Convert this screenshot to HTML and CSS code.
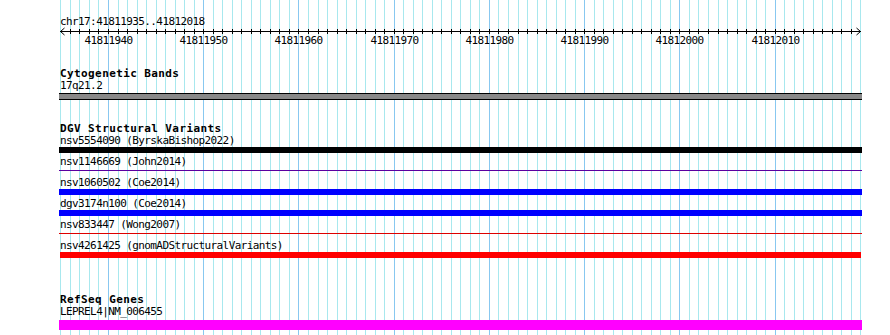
FILE: index.html
```html
<!DOCTYPE html>
<html lang="en">
<head>
    <meta charset="UTF-8">
    <meta name="viewport" content="width=device-width, initial-scale=1.0">
    <title>chr17:41811935..41812018</title>
    <link rel="stylesheet" href="styles.css">
</head>
<body>
    <div class="browser">
        <svg class="guides" id="guides" width="890" height="335"></svg>

        <div class="position">chr17:41811935..41812018</div>
        <svg class="ruler" id="ruler" width="890" height="20">
            <line class="axis" x1="60" y1="4.5" x2="861" y2="4.5"></line>
            <polyline class="arrow" points="64.5,1 60.5,4.5 64.5,8"></polyline>
            <polyline class="arrow" points="856.5,1 860.5,4.5 856.5,8"></polyline>
        </svg>

        <div class="track cyto">
            <div class="track-title">Cytogenetic Bands</div>
            <div class="item">
                <div class="label">17q21.2</div>
                <div class="bar band"></div>
            </div>
        </div>

        <div class="track dgv">
            <div class="track-title">DGV Structural Variants</div>
            <div class="item">
                <div class="label">nsv5554090 (ByrskaBishop2022)</div>
                <div class="bar black"></div>
            </div>
            <div class="item">
                <div class="label">nsv1146669 (John2014)</div>
                <div class="bar thin purple"></div>
            </div>
            <div class="item">
                <div class="label">nsv1060502 (Coe2014)</div>
                <div class="bar blue"></div>
            </div>
            <div class="item">
                <div class="label">dgv3174n100 (Coe2014)</div>
                <div class="bar blue"></div>
            </div>
            <div class="item">
                <div class="label">nsv833447 (Wong2007)</div>
                <div class="bar thin red"></div>
            </div>
            <div class="item">
                <div class="label">nsv4261425 (gnomADStructuralVariants)</div>
                <div class="bar red short"></div>
            </div>
        </div>

        <div class="track refseq">
            <div class="track-title">RefSeq Genes</div>
            <div class="item">
                <div class="label">LEPREL4|NM_006455</div>
                <div class="bar gene"></div>
            </div>
        </div>
    </div>

    <script>
        const svgNS = "http://www.w3.org/2000/svg";
        const start = 41811935;
        const end = 41812018;
        const left = 60.9;
        const bpWidth = 800 / (end - start + 1);

        const guides = document.getElementById("guides");
        const ruler = document.getElementById("ruler");

        function addLine(svg, x1, y1, x2, y2, cls) {
            const l = document.createElementNS(svgNS, "line");
            l.setAttribute("x1", x1);
            l.setAttribute("y1", y1);
            l.setAttribute("x2", x2);
            l.setAttribute("y2", y2);
            l.setAttribute("class", cls);
            svg.appendChild(l);
        }

        for (let i = 0; i <= end - start + 1; i++) {
            const pos = start + i;
            const x = Math.floor(left + i * bpWidth) + 0.5;
            const major = pos % 10 === 0;
            addLine(guides, x, 0, x, 335, major ? "guide major" : "guide");

            if (i > 0 && i < end - start + 1) {
                addLine(ruler, x, 2, x, 7, "tick");
            }

            if (major) {
                const t = document.createElementNS(svgNS, "text");
                t.setAttribute("x", x);
                t.setAttribute("y", 17);
                t.setAttribute("class", "tick-label");
                t.textContent = pos;
                ruler.appendChild(t);
            }
        }
    </script>
</body>
</html>
```

FILE: styles.css
```css
body {
    margin: 0;
    background-color: #fff;
    color: #000;
    font-family: "DejaVu Sans Mono", "Liberation Mono", monospace;
}

.browser {
    position: relative;
    z-index: 0;
    width: 890px;
    height: 335px;
    padding-top: 16px;
    box-sizing: border-box;
    overflow: hidden;
}

.guides {
    position: absolute;
    top: 0;
    left: 0;
    z-index: -1;
}

.guide {
    stroke: #a8e8ee;
    stroke-width: 1;
    shape-rendering: crispEdges;
}

.guide.major {
    stroke: #88c8f0;
}

.position,
.label {
    padding-left: 60px;
    font-size: 11px;
    line-height: 11px;
    letter-spacing: -0.6px;
    white-space: nowrap;
}

.ruler {
    display: block;
}

.axis,
.tick {
    stroke: #000;
    stroke-width: 1;
    shape-rendering: crispEdges;
}

.arrow {
    fill: none;
    stroke: #000;
    stroke-width: 1;
}

.tick-label {
    font-family: "DejaVu Sans Mono", monospace;
    font-size: 11px;
    letter-spacing: -0.6px;
    text-anchor: middle;
    fill: #000;
}

.track-title {
    padding-left: 60px;
    font-size: 11px;
    line-height: 11px;
    font-weight: bold;
    letter-spacing: 0.4px;
    white-space: nowrap;
    margin-bottom: 1px;
}

.cyto {
    margin-top: 21px;
}

.dgv {
    margin-top: 23px;
}

.refseq {
    margin-top: 33px;
}

.dgv .item {
    padding-bottom: 3px;
}

.bar {
    margin-left: 59px;
    width: 803px;
    height: 6px;
    margin-top: 1px;
}

.bar.thin {
    height: 1px;
    margin-top: 3px;
    margin-bottom: 3px;
}

.band {
    height: 5px;
    margin-top: 2px;
    border-top: 1px solid #000;
    border-bottom: 1px solid #000;
    background-color: #888;
}

.black {
    background-color: #000;
}

.purple {
    background-color: #5a00a0;
}

.blue {
    background-color: #0000ff;
}

.red {
    background-color: #ff0000;
}

.bar.thin.red {
    background-color: #dd0000;
}

.short {
    margin-left: 60px;
    width: 801px;
}

.gene {
    height: 10px;
    margin-top: 3px;
    background-color: #ff00ff;
}
```
